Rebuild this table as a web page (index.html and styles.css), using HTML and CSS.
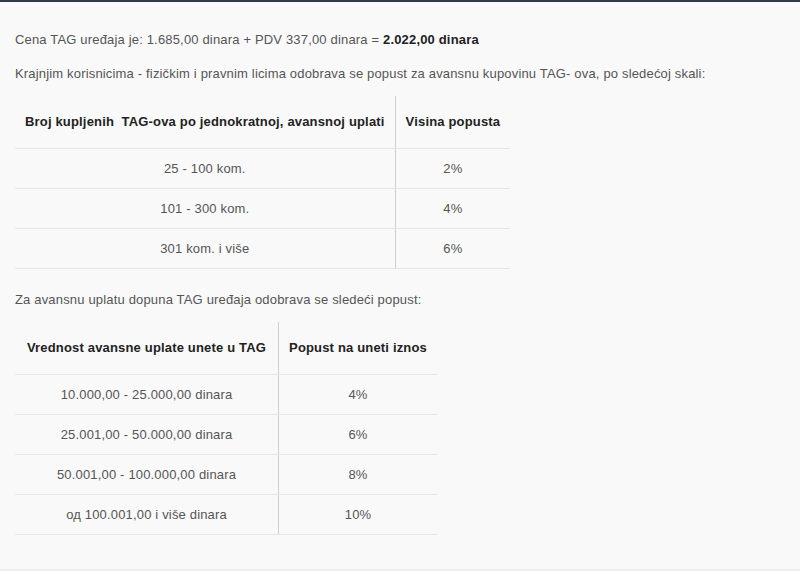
FILE: index.html
```html
<!DOCTYPE html>
<html lang="sr">
<head>
<meta charset="utf-8">
<title>Cena TAG uređaja</title>
<link rel="stylesheet" href="styles.css">
</head>
<body>
<div class="top-bar"></div>
<main class="content">
  <p class="lead">Cena TAG uređaja je: 1.685,00 dinara + PDV 337,00 dinara = <strong>2.022,00 dinara</strong></p>
  <p class="lead second">Krajnjim korisnicima - fizičkim i pravnim licima odobrava se popust za avansnu kupovinu TAG- ova, po sledećoj skali:</p>
  <table class="price-table first-table">
    <thead>
      <tr><th>Broj kupljenih&nbsp; TAG-ova po jednokratnoj, avansnoj uplati</th><th>Visina popusta</th></tr>
    </thead>
    <tbody>
      <tr><td>25 - 100 kom.</td><td>2%</td></tr>
      <tr><td>101 - 300 kom.</td><td>4%</td></tr>
      <tr><td>301 kom. i više</td><td>6%</td></tr>
    </tbody>
  </table>
  <p class="lead third">Za avansnu uplatu dopuna TAG uređaja odobrava se sledeći popust:</p>
  <table class="price-table second-table">
    <thead>
      <tr><th>Vrednost avansne uplate unete u TAG</th><th>Popust na uneti iznos</th></tr>
    </thead>
    <tbody>
      <tr><td>10.000,00 - 25.000,00 dinara</td><td>4%</td></tr>
      <tr><td>25.001,00 - 50.000,00 dinara</td><td>6%</td></tr>
      <tr><td>50.001,00 - 100.000,00 dinara</td><td>8%</td></tr>
      <tr><td>од 100.001,00 i više dinara</td><td>10%</td></tr>
    </tbody>
  </table>
</main>
<div class="bottom-strip"></div>
</body>
</html>
```
FILE: styles.css
```css
html, body {
  margin: 0;
  padding: 0;
  background: #ffffff;
}

body {
  font-family: "Liberation Sans", Arial, sans-serif;
  font-size: 13px;
  letter-spacing: 0.17px;
  color: #555555;
}

.top-bar {
  height: 2px;
  background: #2e3d4c;
}

.content {
  background: #f9f9f9;
  padding: 29px 15px 34px;
}

.lead {
  margin: 0;
  line-height: 18px;
}

.lead strong {
  color: #222222;
  font-weight: bold;
}

.second {
  margin-top: 16px;
}

.third {
  margin-top: 22px;
}

.price-table {
  border-collapse: collapse;
  border-spacing: 0;
}

.first-table {
  margin-top: 13px;
}

.second-table {
  margin-top: 13px;
}

.price-table th {
  color: #222222;
  font-weight: bold;
  line-height: 18px;
  padding: 17px 10px;
  text-align: center;
  border-bottom: 1px solid #e6e6e6;
  white-space: nowrap;
}

.price-table td {
  line-height: 18px;
  padding: 11px 10px 10px;
  text-align: center;
  border-bottom: 1px solid #e6e6e6;
  white-space: nowrap;
}

.second-table th:first-child {
  padding-left: 12px;
  padding-right: 12px;
}

.price-table th + th,
.price-table td + td {
  border-left: 1px solid #cfcfcf;
}

.bottom-strip {
  height: 2px;
  background: #efefef;
}
```
